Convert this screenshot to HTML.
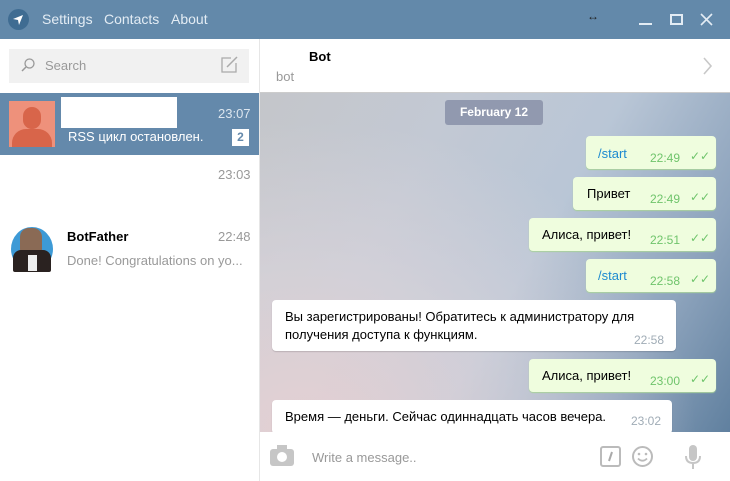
<!DOCTYPE html>
<html><head><meta charset="utf-8"><style>
*{margin:0;padding:0;box-sizing:border-box}
body{width:730px;height:481px;overflow:hidden;position:relative;font-family:"Liberation Sans","DejaVu Sans",sans-serif;font-size:13px;background:#fff}
.a{position:absolute}
.bub{position:absolute;border-radius:4px;box-shadow:0 1px 1px rgba(0,0,0,.15)}
.out{background:#effdde;box-shadow:0 1px 1px #a9d19c}
.in{background:#fff}
.t{position:absolute;font-size:12px}
.tg{color:#6fc46b}
.tgr{color:#a0acb6}
</style></head><body>
<div class="a" style="left:0;top:0;width:730px;height:39px;background:#6389aa"></div>
<div class="a" style="left:8px;top:9px;width:21px;height:21px;border-radius:50%;background:#3f6c92"></div>
<svg class="a" style="left:11px;top:12px" width="15" height="15" viewBox="0 0 15 15"><path d="M2 7 L12 3 L8 13 L7 8 Z" fill="#fff"/></svg>
<div class="a" style="left:42px;top:11px;color:#e3ecf4;font-size:14px">Settings</div>
<div class="a" style="left:104px;top:11px;color:#e3ecf4;font-size:14px">Contacts</div>
<div class="a" style="left:171px;top:11px;color:#e3ecf4;font-size:14px">About</div>
<div class="a" style="left:587px;top:9px;color:#222;font-size:12px">↔</div>
<div class="a" style="left:639px;top:23px;width:13px;height:2px;background:#e3ecf4"></div>
<div class="a" style="left:670px;top:14px;width:13px;height:11px;border:2px solid #e3ecf4"></div>
<svg class="a" style="left:700px;top:13px" width="13" height="13"><path d="M1 1L12 12M12 1L1 12" stroke="#e3ecf4" stroke-width="1.6"/></svg>

<div class="a" style="left:259px;top:39px;width:1px;height:442px;background:#e6e6e6"></div>
<div class="a" style="left:9px;top:49px;width:240px;height:34px;background:#f1f1f1"></div>
<svg class="a" style="left:20px;top:57px" width="16" height="16"><circle cx="9.5" cy="6.5" r="4.5" fill="none" stroke="#999" stroke-width="1.3"/><path d="M6 10L2 14" stroke="#999" stroke-width="1.5"/></svg>
<div class="a" style="left:45px;top:58px;color:#999;font-size:13px">Search</div>
<svg class="a" style="left:220px;top:55px" width="19" height="19"><path d="M16 8v9H2V3h9" fill="none" stroke="#aaa" stroke-width="1.3"/><path d="M7 12L17 2" stroke="#aaa" stroke-width="1.5"/></svg>

<div class="a" style="left:0;top:93px;width:259px;height:62px;background:#6489ab"></div>
<div class="a" style="left:9px;top:101px;width:46px;height:46px;background:#ee917b;overflow:hidden">
<div class="a" style="left:14px;top:6px;width:18px;height:22px;border-radius:9px;background:#d8654a"></div>
<div class="a" style="left:3px;top:28px;width:40px;height:24px;border-radius:14px 14px 0 0;background:#d8654a"></div></div>
<div class="a" style="left:61px;top:97px;width:116px;height:31px;background:#fff"></div>
<div class="a" style="left:218px;top:106px;color:#dce6ef;font-size:13px">23:07</div>
<div class="a" style="left:68px;top:129px;color:#fff;font-size:13px">RSS цикл остановлен.</div>
<div class="a" style="left:232px;top:129px;width:17px;height:17px;background:#fff;color:#6489ab;font-weight:bold;font-size:12px;text-align:center;line-height:17px">2</div>
<div class="a" style="left:218px;top:167px;color:#999;font-size:13px">23:03</div>
<div class="a" style="left:11px;top:227px;width:42px;height:44px;border-radius:50%;background:#3d9ad6"></div>
<div class="a" style="left:20px;top:228px;width:22px;height:30px;border-radius:9px;background:#8a6a55"></div>
<div class="a" style="left:13px;top:250px;width:38px;height:22px;border-radius:8px 8px 2px 2px;background:#2a2220"></div>
<div class="a" style="left:28px;top:255px;width:9px;height:16px;background:#eee"></div>
<div class="a" style="left:67px;top:229px;color:#000;font-size:13px;font-weight:bold">BotFather</div>
<div class="a" style="left:218px;top:229px;color:#999;font-size:13px">22:48</div>
<div class="a" style="left:67px;top:253px;color:#999;font-size:13px">Done! Congratulations on yo...</div>

<div class="a" style="left:260px;top:92px;width:470px;height:1px;background:#ccc"></div>
<div class="a" style="left:309px;top:49px;color:#000;font-size:13px;font-weight:bold">Bot</div>
<div class="a" style="left:276px;top:69px;color:#999;font-size:13px">bot</div>
<svg class="a" style="left:703px;top:57px" width="10" height="18"><path d="M1 1L8 9L1 17" fill="none" stroke="#c8c8c8" stroke-width="1.6"/></svg>

<div class="a" style="left:260px;top:93px;width:470px;height:339px;background:linear-gradient(120deg,#c4c6ca 0%,#c3c9d4 30%,#b9c6d6 55%,#8ea4bd 80%,#60809f 100%)"></div>
<div class="a" style="left:260px;top:93px;width:470px;height:339px;background:radial-gradient(ellipse at 10% 100%,rgba(232,208,210,.9) 0%,rgba(225,215,220,.5) 35%,rgba(220,215,220,0) 65%)"></div>
<div class="a" style="left:445px;top:100px;width:98px;height:25px;border-radius:3px;background:#9199af;color:#fff;font-weight:bold;font-size:12px;text-align:center;line-height:25px">February 12</div>

<div class="bub out" style="left:586px;top:136px;width:130px;height:33px"></div>
<div class="a" style="left:598px;top:146px;color:#1d8ad0">/start</div>
<div class="t tg" style="left:650px;top:151px">22:49</div><div class="t tg" style="left:690px;top:149px">✓✓</div>
<div class="bub out" style="left:573px;top:177px;width:143px;height:33px"></div>
<div class="a" style="left:587px;top:186px;color:#000">Привет</div>
<div class="t tg" style="left:650px;top:192px">22:49</div><div class="t tg" style="left:690px;top:190px">✓✓</div>
<div class="bub out" style="left:529px;top:218px;width:187px;height:33px"></div>
<div class="a" style="left:542px;top:227px;color:#000">Алиса, привет!</div>
<div class="t tg" style="left:650px;top:233px">22:51</div><div class="t tg" style="left:690px;top:231px">✓✓</div>
<div class="bub out" style="left:586px;top:259px;width:130px;height:33px"></div>
<div class="a" style="left:598px;top:268px;color:#1d8ad0">/start</div>
<div class="t tg" style="left:650px;top:274px">22:58</div><div class="t tg" style="left:690px;top:272px">✓✓</div>
<div class="bub in" style="left:272px;top:300px;width:404px;height:51px"></div>
<div class="a" style="left:285px;top:308px;color:#000;line-height:18px">Вы зарегистрированы! Обратитесь к администратору для<br>получения доступа к функциям.</div>
<div class="t tgr" style="left:634px;top:333px">22:58</div>
<div class="bub out" style="left:529px;top:359px;width:187px;height:33px"></div>
<div class="a" style="left:542px;top:368px;color:#000">Алиса, привет!</div>
<div class="t tg" style="left:650px;top:374px">23:00</div><div class="t tg" style="left:690px;top:372px">✓✓</div>
<div class="bub in" style="left:272px;top:400px;width:400px;height:34px"></div>
<div class="a" style="left:285px;top:409px;color:#000">Время — деньги. Сейчас одиннадцать часов вечера.</div>
<div class="t tgr" style="left:631px;top:414px">23:02</div>

<div class="a" style="left:260px;top:432px;width:470px;height:49px;background:#fff"></div>
<div class="a" style="left:270px;top:449px;width:24px;height:17px;border-radius:3px;background:#c6c6c6"></div>
<div class="a" style="left:277px;top:445px;width:10px;height:5px;background:#c6c6c6"></div>
<div class="a" style="left:277px;top:452px;width:10px;height:10px;border-radius:50%;background:#fff"></div>
<div class="a" style="left:312px;top:450px;color:#999;font-size:13px">Write a message..</div>
<div class="a" style="left:600px;top:446px;width:21px;height:21px;border:2px solid #bbb;border-radius:3px"></div>
<svg class="a" style="left:600px;top:446px" width="21" height="21"><path d="M12 6L9 15" stroke="#aaa" stroke-width="2"/></svg>
<svg class="a" style="left:631px;top:445px" width="23" height="23"><circle cx="11.5" cy="11.5" r="9.5" fill="none" stroke="#bbb" stroke-width="2"/><circle cx="8" cy="9" r="1.3" fill="#bbb"/><circle cx="15" cy="9" r="1.3" fill="#bbb"/><path d="M7 13.5Q11.5 18 16 13.5" fill="none" stroke="#bbb" stroke-width="1.8"/></svg>
<svg class="a" style="left:684px;top:445px" width="18" height="26"><rect x="5" y="0" width="8" height="16" rx="4" fill="#c6c6c6"/><path d="M2 11q0 7 7 7t7-7M9 18v6" fill="none" stroke="#c6c6c6" stroke-width="2"/></svg>
</body></html>
